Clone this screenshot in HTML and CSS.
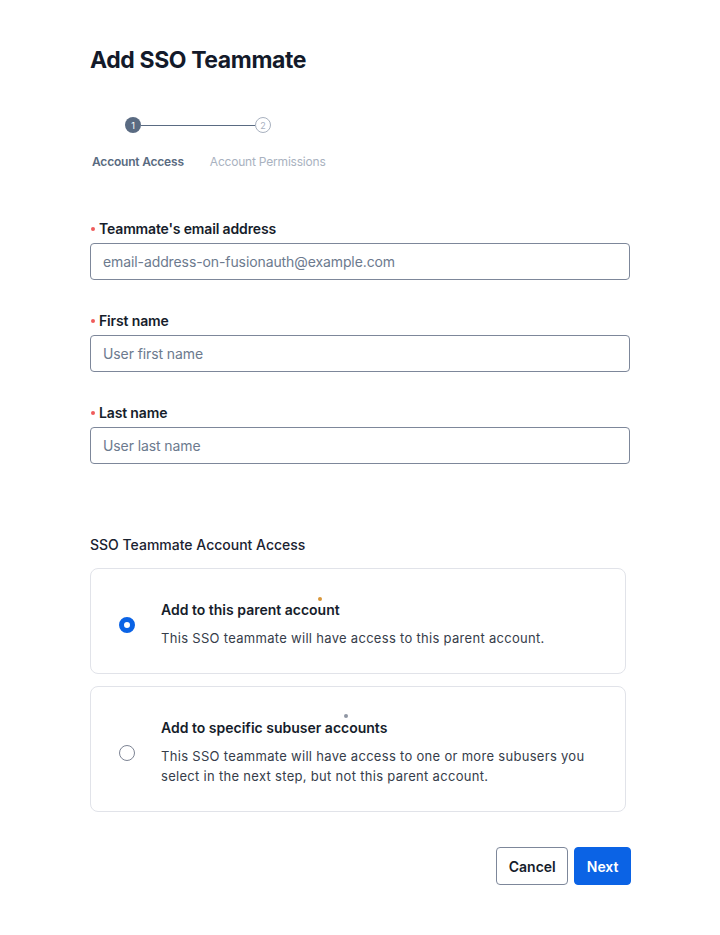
FILE: index.html
```html
<!DOCTYPE html>
<html lang="en">
<head>
<meta charset="utf-8">
<title>Add SSO Teammate</title>
<link rel="stylesheet" href="styles.css">
</head>
<body>
<main class="page">
  <h1 class="title">Add SSO Teammate</h1>

  <div class="stepper">
    <div class="step-track">
      <span class="step-dot step-dot-active">1</span>
      <span class="step-line"></span>
      <span class="step-dot step-dot-todo">2</span>
    </div>
    <div class="step-labels">
      <span class="step-label step-label-active">Account Access</span>
      <span class="step-label step-label-todo">Account Permissions</span>
    </div>
  </div>

  <form class="form">
    <div class="field">
      <label class="field-label"><span class="req"></span>Teammate's email address</label>
      <input class="input" type="text" placeholder="email-address-on-fusionauth@example.com">
    </div>
    <div class="field">
      <label class="field-label"><span class="req"></span>First name</label>
      <input class="input" type="text" placeholder="User first name">
    </div>
    <div class="field">
      <label class="field-label"><span class="req"></span>Last name</label>
      <input class="input" type="text" placeholder="User last name">
    </div>

    <h2 class="section-title">SSO Teammate Account Access</h2>

    <div class="options">
      <label class="option">
        <span class="radio radio-checked"></span>
        <span class="option-body">
          <span class="option-title">Add to this parent account</span>
          <span class="option-desc">This SSO teammate will have access to this parent account.</span>
        </span>
        <span class="speck speck-orange"></span>
      </label>
      <label class="option">
        <span class="radio"></span>
        <span class="option-body">
          <span class="option-title">Add to specific subuser accounts</span>
          <span class="option-desc">This SSO teammate will have access to one or more subusers you select in the next step, but not this parent account.</span>
        </span>
        <span class="speck speck-gray"></span>
      </label>
    </div>

    <div class="actions">
      <button type="button" class="btn btn-secondary">Cancel</button>
      <button type="button" class="btn btn-primary">Next</button>
    </div>
  </form>
</main>
</body>
</html>
```

FILE: styles.css
```css
* { box-sizing: border-box; }

html, body {
  margin: 0;
  padding: 0;
  background: #ffffff;
}

body {
  font-family: Inter, "Noto Sans", "Liberation Sans", sans-serif;
  color: #1a2230;
}

.page {
  width: 540px;
  margin-left: 90px;
  padding-top: 44px;
}

.title {
  margin: 0;
  font-size: 23px;
  line-height: 32px;
  font-weight: 700;
  color: #131a2a;
  letter-spacing: -0.4px;
}

.stepper {
  margin-top: 41px;
}

.step-track {
  display: flex;
  align-items: center;
  padding-left: 35px;
  height: 16px;
}

.step-dot {
  width: 16px;
  height: 16px;
  border-radius: 50%;
  display: flex;
  align-items: center;
  justify-content: center;
  font-size: 9px;
  line-height: 1;
  flex: none;
}

.step-dot-active {
  background: #5a6b82;
  color: #ffffff;
}

.step-dot-todo {
  border: 1px solid #a8b1bf;
  color: #a8b1bf;
  background: #fff;
}

.step-line {
  width: 114px;
  height: 1px;
  background: #5a6b82;
}

.step-labels {
  display: flex;
  gap: 26px;
  margin-top: 21px;
  padding-left: 2px;
}

.step-label {
  font-size: 12px;
  line-height: 16px;
  letter-spacing: -0.2px;
}

.step-label-active {
  font-weight: 600;
  color: #596a80;
}

.step-label-todo {
  color: #a9b2c0;
}

.form {
  margin-top: 49px;
  display: flex;
  flex-direction: column;
}

.field {
  display: flex;
  flex-direction: column;
  margin-bottom: 31px;
}

.field-label {
  display: flex;
  align-items: center;
  font-size: 14px;
  line-height: 20px;
  font-weight: 600;
  color: #161d2b;
  margin-bottom: 4px;
  letter-spacing: -0.15px;
}

.req {
  width: 4px;
  height: 4px;
  border-radius: 50%;
  background: #ef5b5b;
  margin: 0 4px 0 1px;
}

.input {
  width: 540px;
  height: 37px;
  border: 1px solid #7d879a;
  border-radius: 4px;
  padding: 0 12px;
  font-family: inherit;
  font-size: 14px;
  color: #1a2230;
  background: #fff;
  letter-spacing: -0.1px;
}

.input::placeholder {
  color: #6c7a8e;
}

.section-title {
  margin: 40px 0 0;
  font-size: 14px;
  line-height: 20px;
  font-weight: 500;
  color: #1a2230;
}

.options {
  margin-top: 13px;
  display: flex;
  flex-direction: column;
  gap: 12px;
  width: 536px;
}

.option {
  position: relative;
  display: flex;
  align-items: center;
  gap: 26px;
  border: 1px solid #e1e3e9;
  border-radius: 8px;
  padding: 31px 28px 25px;
  cursor: pointer;
}

.radio {
  flex: none;
  width: 16px;
  height: 16px;
  border-radius: 50%;
  border: 1px solid #7d8494;
  background: #fff;
  margin-top: 1px;
}

.radio-checked {
  border: 5.5px solid #0b63e5;
  background: #fff;
}

.option-body {
  display: flex;
  flex-direction: column;
  gap: 8px;
}

.option-title {
  font-size: 14px;
  line-height: 20px;
  font-weight: 600;
  color: #161d2b;
}

.option-desc {
  font-size: 13px;
  line-height: 20px;
  color: #363d4a;
  letter-spacing: 0.3px;
}

.speck {
  position: absolute;
  width: 4px;
  height: 4px;
  border-radius: 50%;
}

.speck-orange {
  background: #d9973a;
  left: 227px;
  top: 28px;
}

.speck-gray {
  background: #8f96a3;
  left: 253px;
  top: 27px;
}

.actions {
  display: flex;
  justify-content: flex-end;
  gap: 6px;
  margin-top: 35px;
  width: 541px;
}

.btn {
  height: 38px;
  border-radius: 4px;
  font-family: inherit;
  font-size: 14px;
  font-weight: 600;
  padding: 0 11.5px;
  cursor: pointer;
}

.btn-secondary {
  background: #fff;
  border: 1px solid #7d879a;
  color: #161d2b;
}

.btn-primary {
  background: #0b63e5;
  border: 1px solid #0b63e5;
  color: #fff;
}
```
